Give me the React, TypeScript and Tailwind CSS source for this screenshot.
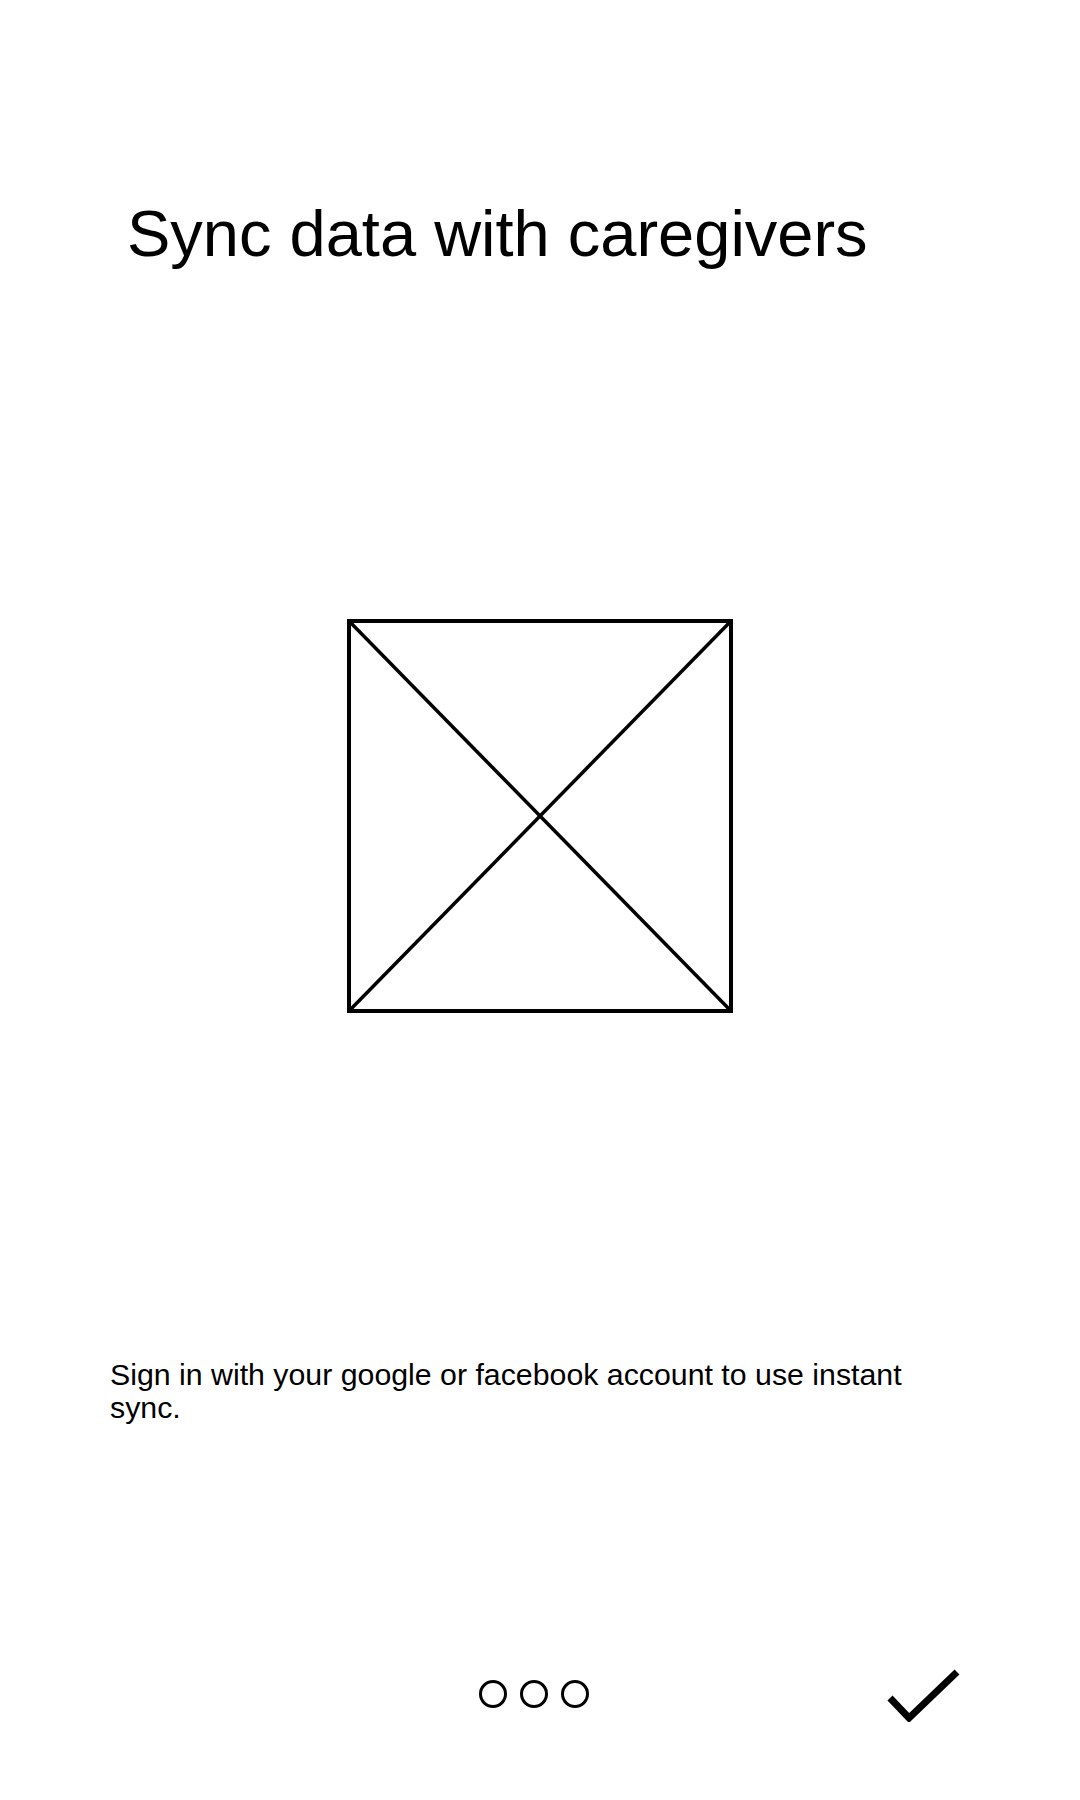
import React from 'react';

const PlaceholderImage: React.FC = () => (
  <svg width="386" height="394" viewBox="0 0 386 394" className="block">
    <rect x="2" y="2" width="382" height="390" fill="none" stroke="#000" strokeWidth="4" />
    <line x1="2" y1="2" x2="384" y2="392" stroke="#000" strokeWidth="3.5" />
    <line x1="384" y1="2" x2="2" y2="392" stroke="#000" strokeWidth="3.5" />
  </svg>
);

const PagerDots: React.FC = () => (
  <div className="flex items-center gap-[13px]">
    {[0, 1, 2].map((i) => (
      <span key={i} className="block w-[28px] h-[28px] rounded-full border-[3px] border-black" />
    ))}
  </div>
);

const CheckIcon: React.FC = () => (
  <svg width="76" height="56" viewBox="0 0 76 56" className="block">
    <polyline
      points="5,32 24,52 72,6"
      fill="none"
      stroke="#000"
      strokeWidth="7"
      strokeLinejoin="miter"
      strokeLinecap="butt"
    />
  </svg>
);

const App: React.FC = () => {
  return (
    <div
      className="w-[1080px] h-[1800px] bg-white text-black flex flex-col"
      style={{ fontFamily: '"Liberation Sans", Arial, sans-serif' }}
    >
      <h1 className="pt-[202px] pl-[127px] text-[65px] leading-[64px] font-normal">
        Sync data with caregivers
      </h1>

      <div className="mt-[353px] pl-[347px]">
        <PlaceholderImage />
      </div>

      <p className="mt-[345px] pl-[110px] w-[940px] text-[30.3px] leading-[33px]">
        Sign in with your google or facebook account to use instant sync.
      </p>

      <div className="mt-[240px] h-[60px] flex items-center pl-[479px]">
        <PagerDots />
        <div className="ml-[296px]">
          <CheckIcon />
        </div>
      </div>
    </div>
  );
};

export default App;
